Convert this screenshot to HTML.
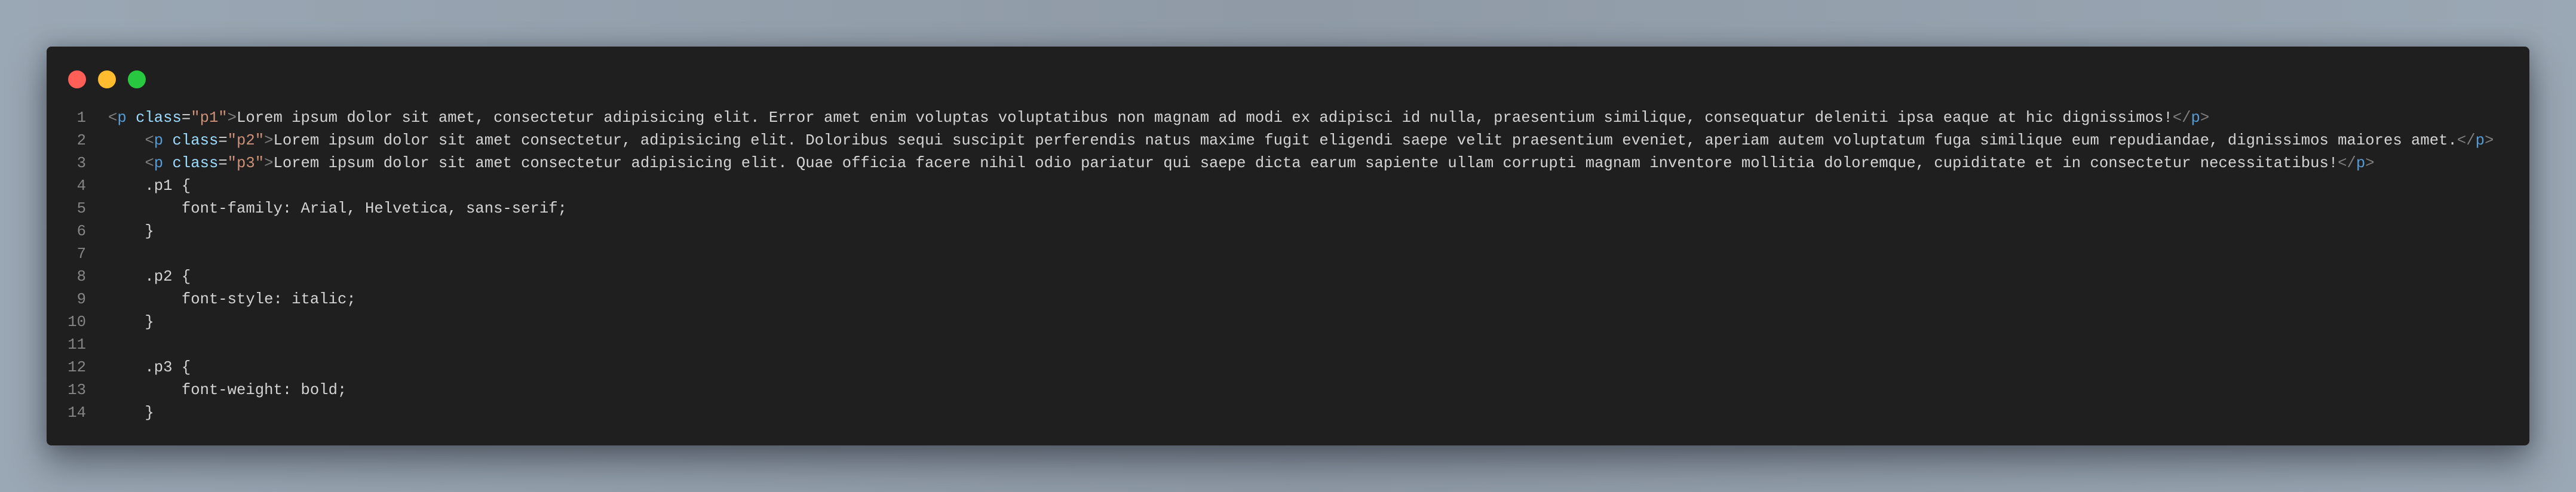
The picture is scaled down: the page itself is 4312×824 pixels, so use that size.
<!DOCTYPE html>
<html><head><meta charset="utf-8"><style>
html,body{margin:0;padding:0;}
body{width:4312px;height:824px;overflow:hidden;background:linear-gradient(90deg,#9aa7b4,#8f9aa6 50%,#9aa7b4);position:relative;}
.win{position:absolute;left:78px;top:78px;width:4156px;height:668px;background:#1f1f1f;border-radius:8px;box-shadow:0 30px 60px rgba(40,45,55,0.55),0 0 30px rgba(40,45,55,0.3);}
.dot{position:absolute;top:40px;width:30px;height:30px;border-radius:50%;}
.code{position:absolute;left:0;top:101px;font-family:"Liberation Mono",monospace;font-size:25.6px;line-height:38px;color:#d4d4d4;white-space:pre;}
.ln{display:inline-block;width:66px;text-align:right;color:#858585;margin-right:37px;}
.t{color:#808080}.n{color:#569cd6}.a{color:#9cdcfe}.s{color:#ce9178}
</style></head><body>
<div class="win">
<div class="dot" style="left:36px;background:#ff5f57"></div>
<div class="dot" style="left:86px;background:#febc2e"></div>
<div class="dot" style="left:136px;background:#28c840"></div>
<div class="code"><div><span class="ln">1</span><span class="t">&lt;</span><span class="n">p</span> <span class="a">class</span>=<span class="s">"p1"</span><span class="t">&gt;</span>Lorem ipsum dolor sit amet, consectetur adipisicing elit. Error amet enim voluptas voluptatibus non magnam ad modi ex adipisci id nulla, praesentium similique, consequatur deleniti ipsa eaque at hic dignissimos!<span class="t">&lt;/</span><span class="n">p</span><span class="t">&gt;</span></div><div><span class="ln">2</span>    <span class="t">&lt;</span><span class="n">p</span> <span class="a">class</span>=<span class="s">"p2"</span><span class="t">&gt;</span>Lorem ipsum dolor sit amet consectetur, adipisicing elit. Doloribus sequi suscipit perferendis natus maxime fugit eligendi saepe velit praesentium eveniet, aperiam autem voluptatum fuga similique eum repudiandae, dignissimos maiores amet.<span class="t">&lt;/</span><span class="n">p</span><span class="t">&gt;</span></div><div><span class="ln">3</span>    <span class="t">&lt;</span><span class="n">p</span> <span class="a">class</span>=<span class="s">"p3"</span><span class="t">&gt;</span>Lorem ipsum dolor sit amet consectetur adipisicing elit. Quae officia facere nihil odio pariatur qui saepe dicta earum sapiente ullam corrupti magnam inventore mollitia doloremque, cupiditate et in consectetur necessitatibus!<span class="t">&lt;/</span><span class="n">p</span><span class="t">&gt;</span></div><div><span class="ln">4</span>    .p1 {</div><div><span class="ln">5</span>        font-family: Arial, Helvetica, sans-serif;</div><div><span class="ln">6</span>    }</div><div><span class="ln">7</span></div><div><span class="ln">8</span>    .p2 {</div><div><span class="ln">9</span>        font-style: italic;</div><div><span class="ln">10</span>    }</div><div><span class="ln">11</span></div><div><span class="ln">12</span>    .p3 {</div><div><span class="ln">13</span>        font-weight: bold;</div><div><span class="ln">14</span>    }</div></div>
</div>
</body></html>
